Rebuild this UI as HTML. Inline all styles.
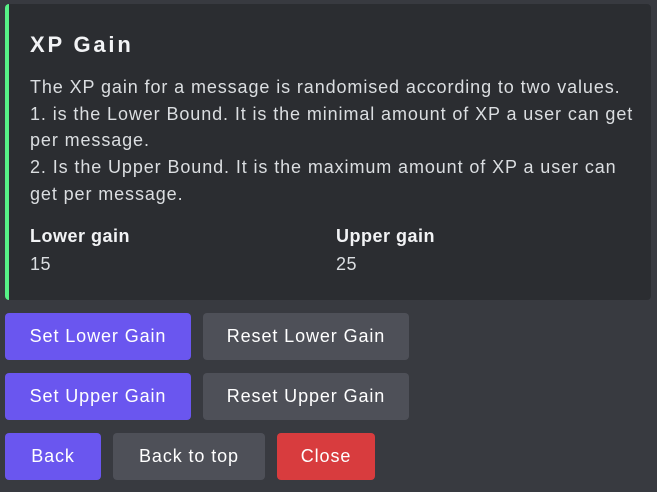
<!DOCTYPE html><html><head><style>
body{margin:0;width:657px;height:492px;background:#383a40;font-family:"Liberation Sans",sans-serif;position:relative;overflow:hidden}
.embed{position:absolute;left:5px;top:4px;width:646px;height:296px;background:#2b2d31;border-radius:4px;border-left:4px solid #57f287;box-sizing:border-box}
.t{position:absolute;left:21px;top:28px;color:#f2f3f5;font-weight:bold;font-size:22px;letter-spacing:2.8px}
.d{position:absolute;left:21px;top:70px;width:615px;color:#dbdee1;font-size:18px;line-height:26.7px;letter-spacing:0.9px}
.fn{position:absolute;top:222px;color:#f2f3f5;font-weight:bold;font-size:18px;letter-spacing:0.5px}
.fv{position:absolute;top:250px;color:#dbdee1;font-size:18px;letter-spacing:0.5px}
.b{position:absolute;height:47px;border-radius:4px;color:#fff;font-size:18px;letter-spacing:0.9px;display:flex;align-items:center;justify-content:center}
.p{background:#6a56ef}.g{background:#4e5058}.r{background:#d83c3e}
</style></head><body>
<div class="embed">
<div class="t">XP Gain</div>
<div class="d">The XP gain for a message is randomised according to two values.<br>1. is the Lower Bound. It is the minimal amount of XP a user can get per message.<br>2. Is the Upper Bound. It is the maximum amount of XP a user can get per message.</div>
<div class="fn" style="left:21px">Lower gain</div><div class="fv" style="left:21px">15</div>
<div class="fn" style="left:327px">Upper gain</div><div class="fv" style="left:327px">25</div>
</div>
<div class="b p" style="left:5px;top:313px;width:186px">Set Lower Gain</div>
<div class="b g" style="left:203px;top:313px;width:206px">Reset Lower Gain</div>
<div class="b p" style="left:5px;top:373px;width:186px">Set Upper Gain</div>
<div class="b g" style="left:203px;top:373px;width:206px">Reset Upper Gain</div>
<div class="b p" style="left:5px;top:433px;width:96px">Back</div>
<div class="b g" style="left:113px;top:433px;width:152px">Back to top</div>
<div class="b r" style="left:277px;top:433px;width:98px">Close</div>
</body></html>
